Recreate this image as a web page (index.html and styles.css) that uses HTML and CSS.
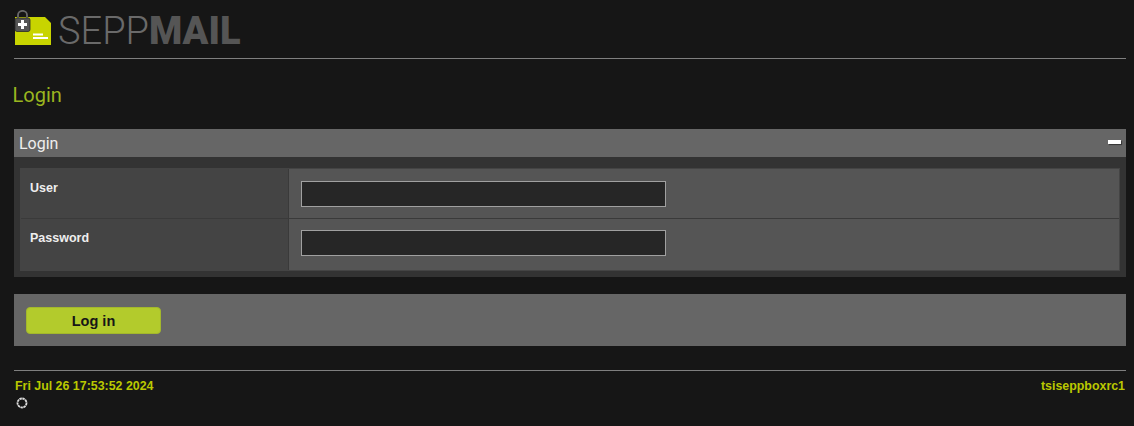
FILE: index.html
```html
<!DOCTYPE html>
<html lang="en">
<head>
  <meta charset="UTF-8">
  <title>Login</title>
  <link rel="stylesheet" href="styles.css">
</head>
<body>
  <div class="header">
    <svg class="logo-icon" width="38" height="36" viewBox="0 0 38 36">
      <path d="M1 7H31L37 13V35H1Z" fill="#c8d400"/>
      <path d="M4 9V5C4 -0.500 13 -0.500 13 5V9" fill="none" stroke="#6a6a6a" stroke-width="1.800"/>
      <rect x="1" y="8" width="15" height="13.500" rx="2" fill="#555" stroke="#2a2a2a" stroke-width="0.800"/>
      <path d="M7 10h3v3h3v3h-3v3H7v-3H4v-3h3z" fill="#fff"/>
      <rect x="19" y="23.500" width="10" height="2" fill="#fff"/>
      <rect x="19" y="27" width="15" height="2" fill="#fff"/>
    </svg>
    <span class="logo-text"><span class="logo-light">SEPP</span><b>MAIL</b></span>
  </div>
  <hr class="rule">

  <h1 class="page-title">Login</h1>

  <div class="panel">
    <div class="panel-head">
      <span>Login</span>
      <span class="collapse"></span>
    </div>
    <div class="panel-body">
      <div class="form-grid">
        <div class="cell-label row-first">User</div>
        <div class="cell-field row-first"><input class="text-input" type="text"></div>
        <div class="cell-label">Password</div>
        <div class="cell-field"><input class="text-input" type="password"></div>
      </div>
    </div>
  </div>

  <div class="actions">
    <button class="button">Log in</button>
  </div>

  <hr class="rule">
  <div class="footer">
    <div>
      <div>Fri Jul 26 17:53:52 2024</div>
      <svg class="status-icon" width="14" height="14" viewBox="0 0 14 14">
        <circle cx="7" cy="7" r="4.500" fill="none" stroke="#ddd" stroke-width="1.800" stroke-dasharray="2.500 0.500"/>
      </svg>
    </div>
    <div>tsiseppboxrc1</div>
  </div>
</body>
</html>
```

FILE: styles.css
```css
body {
  margin: 0;
  padding: 0 8px 0 14px;
  background-color: #161616;
  font-family: "Liberation Sans", Arial, sans-serif;
  color: #fff;
}
.header {
  display: flex;
  align-items: flex-start;
  height: 58px;
}
.logo-icon {
  margin-top: 10px;
}
.logo-text {
  margin: 9px 0 0 6px;
  font-family: Roboto, "Liberation Sans", sans-serif;
  font-size: 38px;
  line-height: 45px;
  color: #555;
}
.logo-light {
  font-weight: 300;
  color: #6a6a6a;
}
.logo-text b {
  font-weight: 900;
}
.rule {
  margin: 0;
  border: none;
  border-top: 1px solid #7f7f7f;
  height: 1px;
}
.page-title {
  margin: 22px 0 21px -1.500px;
  font-family: Roboto, "Liberation Sans", sans-serif;
  font-size: 20px;
  line-height: 26px;
  font-weight: 400;
  color: #9ab51f;
}
.panel {
  background-color: #333;
}
.panel-head {
  display: flex;
  justify-content: space-between;
  align-items: center;
  height: 28px;
  padding: 0 5px;
  background-color: #666;
  font-family: Roboto, "Liberation Sans", sans-serif;
  font-size: 16px;
  color: #eee;
}
.collapse {
  width: 13px;
  height: 4px;
  background-color: #fff;
  box-shadow: 1px 1px 1px #333;
  margin-bottom: 2px;
}
.panel-body {
  padding: 11px 6px 6px;
}
.form-grid {
  display: grid;
  grid-template-columns: 269px 1fr;
  grid-template-rows: 51px 52px;
  outline: 1px solid #444;
  outline-offset: -1px;
}
.cell-label {
  padding: 12px 0 0 10px;
  background-color: #444;
  border-right: 1px solid #3a3a3a;
  font-size: 12.500px;
  font-weight: bold;
  color: #eee;
}
.cell-field {
  padding: 11px 0 0 12px;
  background-color: #555;
}
.cell-label.row-first,
.cell-field.row-first {
  padding-top: 13px;
  border-bottom: 1px solid #3a3a3a;
}
.text-input {
  display: block;
  box-sizing: border-box;
  width: 365px;
  height: 26px;
  background-color: #262626;
  border: 1px solid #a0a0a0;
  color: #fff;
}
.actions {
  margin: 17px 0 24px;
  padding: 13px 12px 12px;
  background-color: #666;
}
.button {
  display: block;
  box-sizing: border-box;
  width: 135px;
  height: 27px;
  border: 1px solid #a3b82c;
  border-radius: 4px;
  background-color: #b3cb2c;
  font-family: "Liberation Sans", Arial, sans-serif;
  font-size: 14.500px;
  font-weight: bold;
  color: #161616;
  cursor: pointer;
}
.footer {
  display: flex;
  justify-content: space-between;
  padding: 7px 1px 0;
  font-size: 12.400px;
  font-weight: bold;
  color: #bac800;
}
.status-icon {
  display: block;
  margin-top: 3px;
}
```
